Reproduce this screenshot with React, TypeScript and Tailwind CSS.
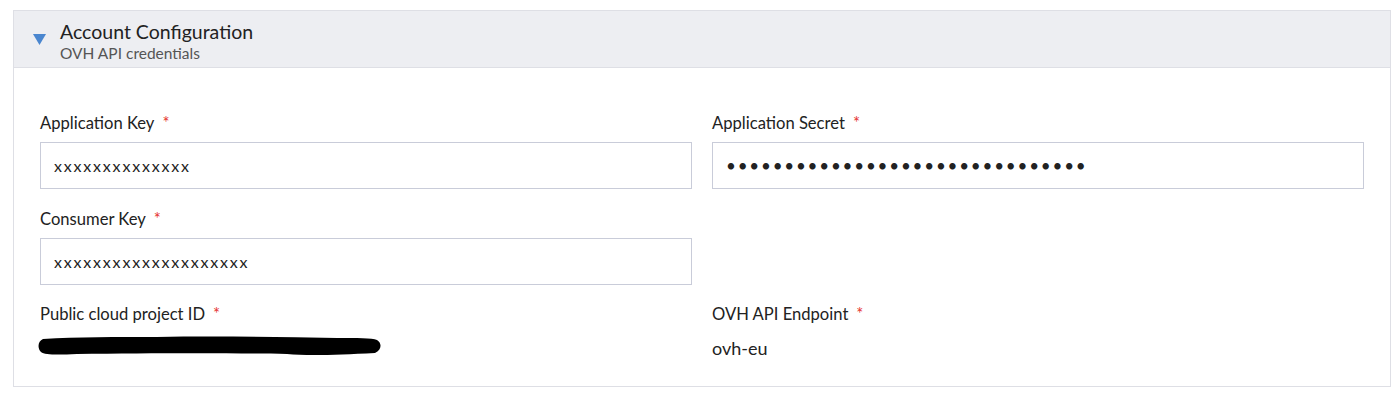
import React from 'react';

const font = { fontFamily: 'Lato, "Noto Sans", sans-serif' };

function Label({ children }: { children: React.ReactNode }) {
  return (
    <div className="text-[16.6px] leading-6 text-[#222]">
      {children}
      <span className="ml-[8px] text-[#e5342f]">*</span>
    </div>
  );
}

function TextInput({ value, type = 'text' }: { value: string; type?: string }) {
  const spacing = type === 'password' ? 'tracking-[1.8px] text-[17px]' : 'tracking-[1.8px] text-[16px]';
  return (
    <input
      type={type}
      defaultValue={value}
      readOnly
      className={`mt-[7px] h-[47px] w-full border border-[#c9ccd9] bg-white px-[13px] text-[#222] outline-none ${spacing}`}
      style={font}
    />
  );
}

export default function App() {
  return (
    <div className="min-h-screen bg-white px-[13px] pt-[10px]" style={font}>
      <div className="w-[1378px] border border-[#dedfe5]">
        {/* Header */}
        <div className="flex h-[57px] items-start border-b border-[#dedfe5] bg-[#edeef2] pl-[19px] pt-[10px]">
          <svg width="13" height="11" viewBox="0 0 13 11" className="mr-[14px] mt-[13px]">
            <polygon points="0,0 13,0 6.5,11" fill="#4a86cf" />
          </svg>
          <div>
            <div className="text-[19.5px] leading-[22px] text-[#222]">Account Configuration</div>
            <div className="mt-[1px] text-[15.5px] leading-[18px] text-[#555]">OVH API credentials</div>
          </div>
        </div>

        {/* Body */}
        <div className="grid grid-cols-2 gap-x-[20px] px-[26px] pb-[26px] pt-[43px]">
          <div>
            <Label>Application Key</Label>
            <TextInput value="xxxxxxxxxxxxxx" />
          </div>
          <div>
            <Label>Application Secret</Label>
            <TextInput type="password" value="xxxxxxxxxxxxxxxxxxxxxxxxxxxxxxx" />
          </div>

          <div className="mt-[18px]">
            <Label>Consumer Key</Label>
            <TextInput value="xxxxxxxxxxxxxxxxxxxx" />
          </div>
          <div />

          <div className="mt-[17px]">
            <Label>Public cloud project ID</Label>
            <div className="mt-[10px] h-[24px]">
              <svg width="346" height="22" viewBox="0 0 346 22" className="-ml-[3px]">
                <path
                  d="M6 3 C40 1 80 1 120 1 C180 0 240 1 300 2 C320 2 335 2 340 4 C345 7 345 14 338 17 C300 19 270 20 250 18 C200 17 120 17 40 18 C20 19 8 19 4 16 C0 12 1 5 6 3 Z"
                  fill="#000"
                />
              </svg>
            </div>
          </div>
          <div className="mt-[17px]">
            <Label>OVH API Endpoint</Label>
            <div className="mt-[10px] text-[18px] leading-6 text-[#222]">ovh-eu</div>
          </div>
        </div>
      </div>
    </div>
  );
}
